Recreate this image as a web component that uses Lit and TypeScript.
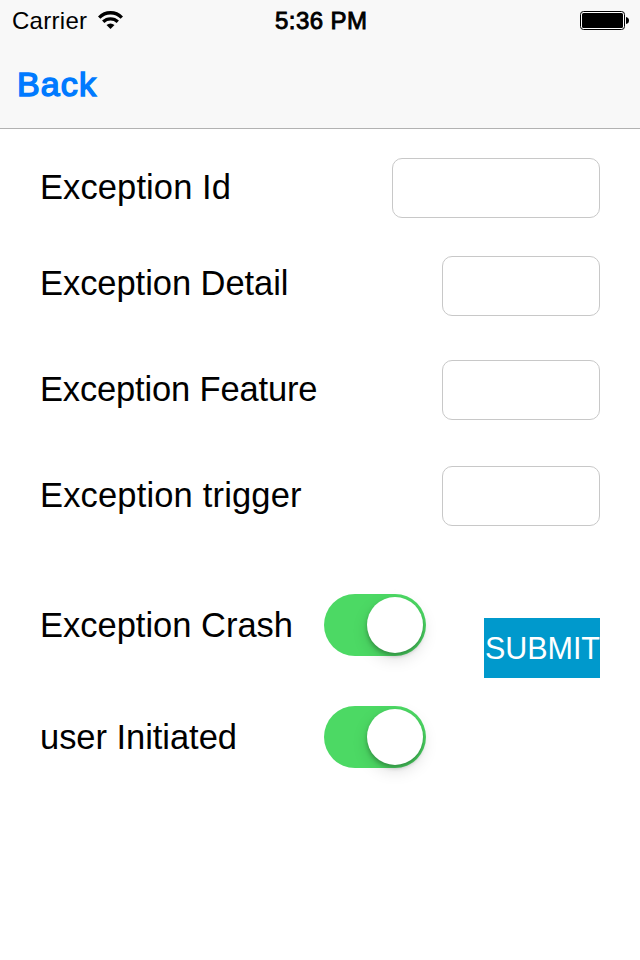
import { LitElement, html, css, svg } from "lit";
import { customElement, state } from "lit/decorators.js";

interface TextRow { label: string; kind: string; width: number; labelWidth: number; dy: number; }

@customElement("ios-switch")
class IosSwitch extends LitElement {
  static styles = css`
    :host { display: block; width: 102px; height: 62px; }
    .track { display: flex; justify-content: flex-end; box-sizing: border-box; width: 102px; height: 62px; padding: 3px; border-radius: 31px; background: #4cd964; }
    .knob { width: 56px; height: 56px; border-radius: 50%; background: #fff; box-shadow: 0 6px 16px rgba(0,0,0,.13), 0 3px 4px rgba(0,0,0,.26); }
  `;
  render() { return html`<div class="track"><div class="knob"></div></div>`; }
}

@customElement("app-root")
class AppRoot extends LitElement {
  static styles = css`
    :host { display: block; width: 640px; height: 960px; background: #fff; color: #000; overflow: hidden; font-family: "Liberation Sans", Arial, sans-serif; }
    .header { box-sizing: border-box; height: 129px; background: #f8f8f8; border-bottom: 1px solid #b2b2b2; }
    .status { display: grid; grid-template-columns: 1fr auto 1fr; align-items: center; height: 40px; padding: 0 11px 0 12px; }
    .carrier { display: flex; align-items: center; gap: 11px; }
    .battery { justify-self: end; display: block; margin-top: 1px; }
    .wifi { display: block; }
    .nav { height: 88px; padding: 0 17px; display: flex; align-items: center; }
    .t { display: block; overflow: visible; }
    .form { padding: 29px 40px 0; }
    .row { display: flex; justify-content: space-between; align-items: center; height: 60px; }
    .id { margin-bottom: 38px; }
    .detail { margin-bottom: 44px; }
    .feature { margin-bottom: 46px; }
    .input { box-sizing: border-box; height: 60px; border: 1px solid #c8c8c8; border-radius: 10px; background: #fff; }
    .bottom { display: flex; justify-content: space-between; margin-top: 68px; }
    .switches { display: grid; row-gap: 50px; width: 386px; }
    .srow { display: flex; justify-content: space-between; align-items: center; height: 62px; }
    .submit { margin-top: 24px; width: 116px; height: 60px; background: #0099cc; display: flex; align-items: center; justify-content: center; }
  `;
  @state() private rows: TextRow[] = [
    { label: "Exception Id", kind: "id", width: 208, labelWidth: 191, dy: 0 },
    { label: "Exception Detail", kind: "detail", width: 158, labelWidth: 248.5, dy: -2 },
    { label: "Exception Feature", kind: "feature", width: 158, labelWidth: 277.5, dy: 0 },
    { label: "Exception trigger", kind: "trigger", width: 158, labelWidth: 261.5, dy: 0 },
  ];
  @state() private toggles = [
    { label: "Exception Crash", labelWidth: 253 },
    { label: "user Initiated", labelWidth: 197 },
  ];
  private text(label: string, width: number, height: number, baseline: number, size: number, color = "#000", stroke = 0) {
    return html`<svg class="t" width=${width} height=${height}>${svg`<text x="0" y=${baseline} font-size=${size} fill=${color} stroke=${color} stroke-width=${stroke} textLength=${width} lengthAdjust="spacing">${label}</text>`}</svg>`;
  }
  render() {
    return html`
      <div class="header">
        <div class="status">
          <div class="carrier">${this.text("Carrier", 75, 30, 24, 24)}
            <svg class="wifi" width="25" height="18" viewBox="0 0 25 18"><g fill="none" stroke="#000" stroke-width="3.3"><path d="M1.2 6.6C7.5.1 17.5.1 23.8 6.6"/><path d="M5.2 10.7C9.3 6.8 15.7 6.8 19.8 10.7"/></g><path d="M8.5 14Q12.5 11 16.5 14L12.5 18z"/></svg>
          </div>
          ${this.text("5:36 PM", 92, 30, 24, 24, "#000", 0.9)}
          <svg class="battery" width="49" height="19" viewBox="0 0 49 19"><rect x=".5" y=".5" width="44" height="18" rx="3" fill="#fff" stroke="#000"/><rect x="2" y="2" width="41" height="15" rx="1.5"/><path d="M46 6q3 .5 3 3.5t-3 3.5z"/></svg>
        </div>
        <div class="nav">${this.text("Back", 79, 40, 32, 34, "#007aff", 1.5)}</div>
      </div>
      <div class="form">
        ${this.rows.map(r => html`<div class="row ${r.kind}">${this.text(r.label, r.labelWidth, 40, 31 + r.dy, 34.5)}<div class="input" style="width:${r.width}px"></div></div>`)}
        <div class="bottom">
          <div class="switches">
            ${this.toggles.map(r => html`<div class="srow">${this.text(r.label, r.labelWidth, 40, 32, 34.5)}<ios-switch></ios-switch></div>`)}
          </div>
          <div class="submit">${this.text("SUBMIT", 115, 40, 31, 30.5, "#fff")}</div>
        </div>
      </div>`;
  }
}
